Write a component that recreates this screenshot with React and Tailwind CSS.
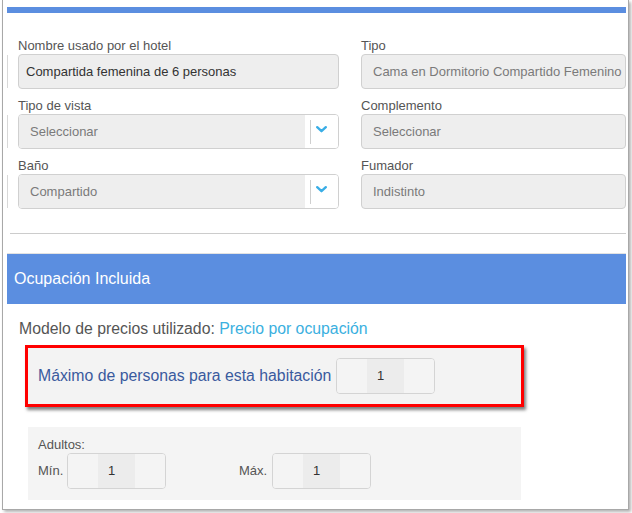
import React from 'react';

const labelCls = 'block text-[13px] leading-[16px] text-[#555]';
const boxCls = 'h-[35px] rounded-[4px] border border-[#d0d0d0] bg-[#eeeeee] flex items-center text-[13px]';

const Chevron = () => (
  <svg width="11" height="7" viewBox="0 0 11 7">
    <path d="M1.2 1.2 L5.5 5.2 L9.8 1.2" fill="none" stroke="#3aaee6" strokeWidth="2.4" strokeLinecap="round" strokeLinejoin="round" />
  </svg>
);

// left column field, with the cut-off edge at the far left
const LeftField = ({ label, children }) => (
  <div>
    <label className={`${labelCls} ml-[11px]`}>{label}</label>
    <div className="flex">
      <div className="w-px bg-[#d8d8d8] my-[1px]" />
      <div className="ml-[10px] w-[321px]">{children}</div>
    </div>
  </div>
);

const RightField = ({ label, value }) => (
  <div className="w-[330px]">
    <label className={labelCls}>{label}</label>
    <div className={`${boxCls} pl-[11px] text-[#7a7a7a]`}>{value}</div>
  </div>
);

const SelectBox = ({ value }) => (
  <div className="h-[35px] rounded-[4px] border border-[#d0d0d0] flex text-[13px] overflow-hidden">
    <div className="flex-1 bg-[#eeeeee] flex items-center pl-[11px] text-[#7a7a7a]">{value}</div>
    <div className="w-[33px] bg-white flex items-center">
      <div className="w-px h-[24px] bg-[#cfcfcf] ml-[5px]" />
      <div className="ml-[5px] mb-[4px]"><Chevron /></div>
    </div>
  </div>
);

const NumBox = ({ value }) => (
  <div className="w-[99px] h-[36px] rounded-[4px] border border-[#d4d4d4] flex text-[13px] text-[#333] overflow-hidden">
    <div className="w-[30px] bg-[#f4f4f4]" />
    <div className="w-[37px] bg-[#ececec] flex items-center pl-[10px]">{value}</div>
    <div className="flex-1 bg-[#f4f4f4]" />
  </div>
);

export default function App() {
  return (
    <div className="w-[632px] h-[513px] bg-white" style={{ fontFamily: '"Liberation Sans", Arial, sans-serif' }}>
      <div className="ml-[2px] w-[627px] h-[510px] bg-white border-l border-r border-b border-[#a8a8a8] shadow-[2px_2px_3px_rgba(0,0,0,0.3)] overflow-hidden pl-[4px] pr-[2px]">
        <div className="mt-[7px] h-[6px] bg-[#5b8ee0]" />

        {/* room data */}
        <div className="mt-[25px] flex flex-col gap-[9px] overflow-hidden">
          <div className="flex gap-[22px]">
            <LeftField label="Nombre usado por el hotel">
              <div className={`${boxCls} pl-[7px] text-[#333]`}>Compartida femenina de 6 personas</div>
            </LeftField>
            <RightField label="Tipo" value="Cama en Dormitorio Compartido Femenino" />
          </div>
          <div className="flex gap-[22px]">
            <LeftField label="Tipo de vista"><SelectBox value="Seleccionar" /></LeftField>
            <RightField label="Complemento" value="Seleccionar" />
          </div>
          <div className="flex gap-[22px]">
            <LeftField label="Baño"><SelectBox value="Compartido" /></LeftField>
            <RightField label="Fumador" value="Indistinto" />
          </div>
        </div>

        <div className="mt-[24px] ml-[3px] h-px bg-[#cccccc]" />

        {/* occupancy */}
        <div className="mt-[19px] border-t border-[#e2e2e2] bg-[#5b8ee0] h-[51px] flex items-center pl-[7px]">
          <span className="text-[16px] text-white">Ocupación Incluida</span>
        </div>

        <p className="mt-[15px] ml-[12px] text-[15.8px] leading-[20px] text-[#555]">
          Modelo de precios utilizado: <span className="text-[#3bb0e0]">Precio por ocupación</span>
        </p>

        <div className="mt-[6px] ml-[18px] w-[499px] h-[62px] border-[3px] border-[#ff0000] bg-[#f3f3f3] shadow-[2px_3px_3px_rgba(0,0,0,0.5)] flex items-center pl-[10px]">
          <span className="w-[298px] text-[15.8px] leading-[20px] text-[#3a5a9e]">Máximo de personas para esta habitación</span>
          <NumBox value="1" />
        </div>

        <div className="mt-[20px] ml-[21px] w-[493px] h-[73px] bg-[#f4f4f4] pt-[10px] pl-[10px]">
          <div className="text-[13px] leading-[16px] text-[#555]">Adultos:</div>
          <div className="flex items-center">
            <span className="w-[29px] text-[13px] text-[#555]">Mín.</span>
            <NumBox value="1" />
            <span className="ml-[73px] w-[33px] text-[13px] text-[#555]">Máx.</span>
            <NumBox value="1" />
          </div>
        </div>
      </div>
    </div>
  );
}
